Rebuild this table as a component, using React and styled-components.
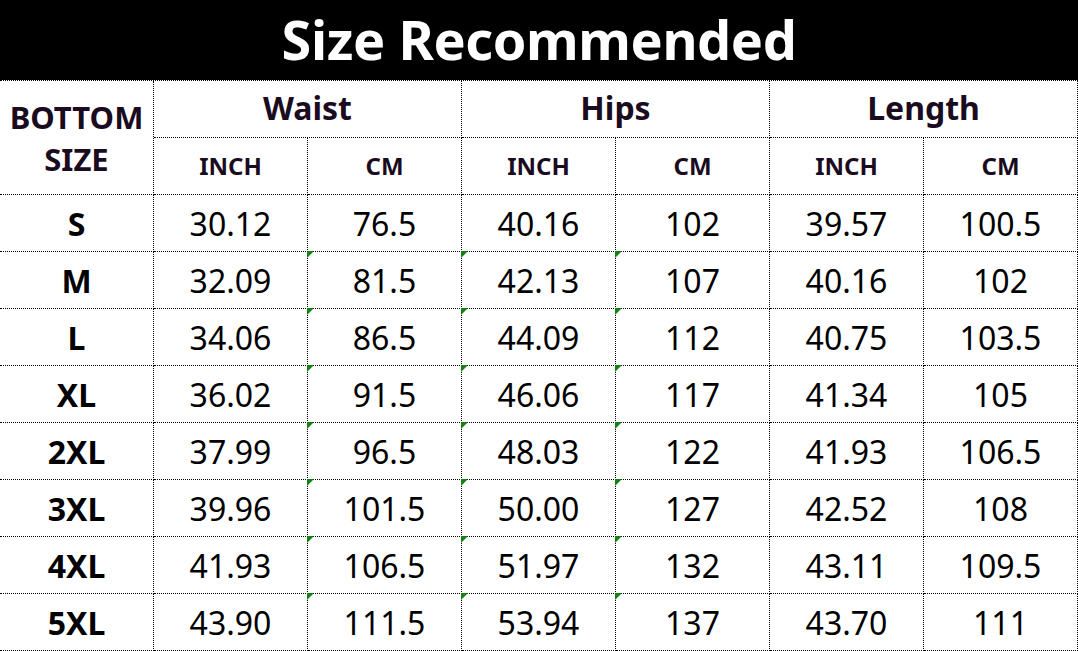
import React from "react";
import styled, { createGlobalStyle } from "styled-components";

const GlobalStyle = createGlobalStyle`
    html, body {
        margin: 0;
        padding: 0;
        background: #ffffff;
    }
    body {
        font-family: "Noto Sans", "Open Sans", sans-serif;
    }
`;

const rows = [
    ["S", "30.12", "76.5", "40.16", "102", "39.57", "100.5"],
    ["M", "32.09", "81.5", "42.13", "107", "40.16", "102"],
    ["L", "34.06", "86.5", "44.09", "112", "40.75", "103.5"],
    ["XL", "36.02", "91.5", "46.06", "117", "41.34", "105"],
    ["2XL", "37.99", "96.5", "48.03", "122", "41.93", "106.5"],
    ["3XL", "39.96", "101.5", "50.00", "127", "42.52", "108"],
    ["4XL", "41.93", "106.5", "51.97", "132", "43.11", "109.5"],
    ["5XL", "43.90", "111.5", "53.94", "137", "43.70", "111"],
];

const groups = ["Waist", "Hips", "Length"];

// columns that carry the little green excel marker (rows after the first)
const flaggedCols = [2, 3, 4];

const SizeChart = () => {
    return (
        <Page>
            <GlobalStyle />
            <Banner>Size Recommended</Banner>
            <Grid>
                <Cell $rowSpan={2} $head>
                    <Stacked>BOTTOM<br />SIZE</Stacked>
                </Cell>
                {groups.map(g => (
                    <Cell key={g} $group>{g}</Cell>
                ))}
                {groups.map(g => (
                    <React.Fragment key={g + "-units"}>
                        <Cell $unit>INCH</Cell>
                        <Cell $unit>CM</Cell>
                    </React.Fragment>
                ))}
                {rows.map((row, r) =>
                    row.map((val, c) => (
                        <Cell
                            key={r + "-" + c}
                            $size={c === 0}
                            $flag={r > 0 && flaggedCols.includes(c)}>
                            {val}
                        </Cell>
                    ))
                )}
            </Grid>
        </Page>
    );
};

const Page = styled.div`
    width: 1078px;
    height: 651px;
    overflow: hidden;
`;

const Banner = styled.div`
    height: 80px;
    background: #000000;
    color: #ffffff;
    display: flex;
    align-items: center;
    justify-content: center;
    font-size: 54px;
    font-weight: 700;
    letter-spacing: -0.4px;
    padding-bottom: 2px;
    box-sizing: border-box;
`;

const Grid = styled.div`
    display: grid;
    grid-template-columns: repeat(7, 154px);
    grid-auto-rows: 57px;
    border-top: 1px dotted #000000;
`;

const Cell = styled.div`
    position: relative;
    box-sizing: border-box;
    display: flex;
    align-items: center;
    justify-content: center;
    border-right: 1px dotted #000000;
    border-bottom: 1px dotted #000000;
    color: #000000;
    font-size: 32px;
    font-weight: 400;
    grid-column: span ${p => (p.$group ? 2 : 1)};
    grid-row: span ${p => (p.$rowSpan ? p.$rowSpan : 1)};

    ${p => p.$group && `
        font-size: 32px;
        font-weight: 700;
        color: #1b0b1f;
        padding-bottom: 3px;
    `}

    ${p => p.$unit && `
        font-size: 24px;
        font-weight: 700;
        color: #1b0b1f;
        padding-bottom: 2px;
    `}

    ${p => p.$head && `
        font-size: 31px;
        font-weight: 700;
        color: #1b0b1f;
    `}

    ${p => p.$size && `
        font-size: 32px;
        font-weight: 700;
    `}

    &::before {
        content: "";
        display: ${p => (p.$flag ? "block" : "none")};
        position: absolute;
        top: -1px;
        left: -1px;
        width: 0;
        height: 0;
        border-top: 7px solid #128012;
        border-right: 7px solid transparent;
    }
`;

const Stacked = styled.div`
    text-align: center;
    line-height: 42px;
`;

export default SizeChart;
